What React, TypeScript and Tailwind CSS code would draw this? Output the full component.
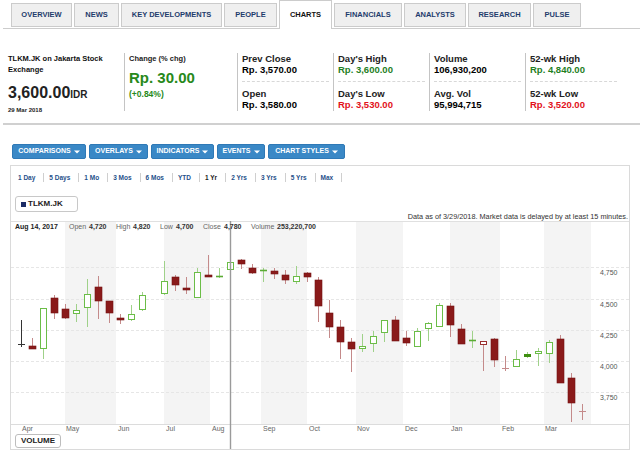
import React from 'react';

const tabs = [
  { label: 'OVERVIEW', w: 'w-[61px]' },
  { label: 'NEWS', w: 'w-[45px]' },
  { label: 'KEY DEVELOPMENTS', w: 'w-[101px]' },
  { label: 'PEOPLE', w: 'w-[53px]' },
  { label: 'CHARTS', w: 'w-[53px]', active: true },
  { label: 'FINANCIALS', w: 'w-[68px]' },
  { label: 'ANALYSTS', w: 'w-[62px]' },
  { label: 'RESEARCH', w: 'w-[63px]' },
  { label: 'PULSE', w: 'w-[48px]' },
];

const green = 'text-[#1f801f]';
const red = 'text-[#e2111b]';

const stats = [
  { a: 'Prev Close', av: 'Rp. 3,570.00', ac: 'text-black', b: 'Open', bv: 'Rp. 3,580.00', bc: 'text-black' },
  { a: "Day's High", av: 'Rp. 3,600.00', ac: green, b: "Day's Low", bv: 'Rp. 3,530.00', bc: red },
  { a: 'Volume', av: '106,930,200', ac: 'text-black', b: 'Avg. Vol', bv: '95,994,715', bc: 'text-black' },
  { a: '52-wk High', av: 'Rp. 4,840.00', ac: green, b: '52-wk Low', bv: 'Rp. 3,520.00', bc: red },
];

const buttons = [
  { label: 'COMPARISONS', w: 'w-[74px]' },
  { label: 'OVERLAYS', w: 'w-[59px]' },
  { label: 'INDICATORS', w: 'w-[63px]' },
  { label: 'EVENTS', w: 'w-[48px]' },
  { label: 'CHART STYLES', w: 'w-[77px]' },
];

const ranges = ['1 Day', '5 Days', '1 Mo', '3 Mos', '6 Mos', 'YTD', '1 Yr', '2 Yrs', '3 Yrs', '5 Yrs', 'Max'];

// x, bodyTop, bodyBottom, wickTop, wickBottom, kind
type C = [number, number, number, number, number, string];
const candles: C[] = [
  [21, 344, 344, 320, 347, 'k'],
  [32, 346, 349, 338, 349, 'r'],
  [43, 308, 349, 308, 359, 'g'],
  [54, 298, 313, 295, 319, 'r'],
  [65, 309, 318, 304, 319, 'r'],
  [76, 310, 314, 304, 322, 'g'],
  [87, 294, 308, 279, 327, 'g'],
  [98, 287, 301, 276, 319, 'r'],
  [109, 301, 313, 301, 323, 'r'],
  [120, 318, 320, 314, 324, 'r'],
  [131, 314, 320, 305, 321, 'g'],
  [142, 295, 310, 292, 311, 'g'],
  [164, 281, 294, 261, 295, 'g'],
  [175, 277, 285, 275, 291, 'r'],
  [186, 288, 290, 277, 294, 'r'],
  [197, 272, 298, 268, 298, 'g'],
  [208, 275, 277, 255, 277, 'r'],
  [219, 276, 276, 268, 278, 'gc'],
  [230, 262, 270, 262, 270, 'g'],
  [241, 260, 264, 259, 269, 'r'],
  [252, 268, 273, 264, 274, 'r'],
  [263, 270, 270, 268, 282, 'gc'],
  [274, 271, 274, 268, 279, 'r'],
  [285, 275, 280, 270, 284, 'r'],
  [296, 276, 282, 266, 284, 'g'],
  [307, 273, 277, 272, 282, 'r'],
  [318, 280, 306, 277, 322, 'r'],
  [329, 313, 327, 300, 338, 'r'],
  [340, 327, 342, 320, 359, 'r'],
  [351, 342, 349, 338, 372, 'r'],
  [362, 346, 349, 334, 352, 'g'],
  [373, 336, 344, 331, 352, 'g'],
  [384, 320, 333, 320, 342, 'g'],
  [395, 320, 341, 316, 341, 'r'],
  [406, 338, 343, 331, 346, 'r'],
  [417, 331, 347, 328, 347, 'g'],
  [428, 323, 329, 322, 341, 'g'],
  [439, 305, 327, 303, 327, 'g'],
  [450, 306, 325, 303, 337, 'r'],
  [461, 329, 344, 324, 344, 'r'],
  [472, 340, 340, 331, 348, 'gc'],
  [483, 341, 345, 341, 371, 'rh'],
  [494, 339, 360, 338, 367, 'r'],
  [505, 368, 368, 356, 371, 'rc'],
  [516, 359, 367, 350, 367, 'g'],
  [527, 354, 357, 352, 358, 'gf'],
  [538, 351, 354, 348, 366, 'g'],
  [549, 342, 354, 340, 363, 'g'],
  [560, 339, 383, 335, 383, 'r'],
  [571, 378, 403, 373, 422, 'r'],
  [582, 411, 411, 404, 420, 'rc'],
];

const bands: [number, number][] = [
  [65, 116], [164, 210], [261, 307], [356, 403], [450, 500], [544, 591],
];

const months: [string, number][] = [
  ['Apr', 22], ['May', 66], ['Jun', 118], ['Jul', 166], ['Aug', 212], ['Sep', 263],
  ['Oct', 309], ['Nov', 357], ['Dec', 405], ['Jan', 451], ['Feb', 502], ['Mar', 545],
];

const grid: [string, number][] = [
  ['4,750', 267], ['4,500', 299], ['4,250', 330], ['4,000', 361], ['3,750', 392],
];

function Candle({ c }: { c: C }) {
  const [x, top, bot, wt, wb, k] = c;
  const cx = x + 0.5;
  const isRed = k === 'r' || k === 'rc' || k === 'rh';
  const wick = k === 'k' ? '#333' : isRed ? '#c48a8a' : '#9fd189';
  return (
    <g>
      <line x1={cx} x2={cx} y1={wt} y2={wb} stroke={wick} strokeWidth={1} />
      {k === 'r' && <rect x={x - 3} y={top} width={7} height={Math.max(bot - top, 2)} fill="#8a1a1a" stroke="#741313" strokeWidth={0.6} />}
      {k === 'g' && <rect x={cx - 3} y={top + 0.5} width={6} height={Math.max(bot - top - 1, 1)} fill="#fff" stroke="#6bbd47" strokeWidth={1} />}
      {k === 'rh' && <rect x={cx - 3} y={top + 0.5} width={6} height={Math.max(bot - top - 1, 1)} fill="#fff" stroke="#9a3030" strokeWidth={1} />}
      {k === 'gf' && <rect x={x - 3} y={top} width={7} height={bot - top} fill="#3f8f10" />}
      {(k === 'gc' || k === 'rc' || k === 'k') && (
        <line x1={x - 3} x2={x + 4} y1={top + 0.5} y2={top + 0.5} stroke={k === 'gc' ? '#5aab34' : wick} strokeWidth={k === 'gc' ? 1.6 : 1} />
      )}
    </g>
  );
}

function Chart() {
  const label = { fontFamily: 'Liberation Sans, Arial, sans-serif' };
  return (
    <div className="relative h-[228px] w-[618px]">
      <svg width={618} height={228} viewBox="11 221 618 228" className="block">
        {bands.map(([a, b]) => (
          <rect key={a} x={a} y={221} width={b - a} height={203} fill="#f4f4f4" />
        ))}
        {grid.map(([t, y]) => (
          <g key={t}>
            <line x1={11} x2={629} y1={y + 0.5} y2={y + 0.5} stroke="#e6e6e6" strokeDasharray="3 2" />
            <text x={600} y={y + 7.5} fontSize={7} fill="#555" style={label}>{t}</text>
          </g>
        ))}
        <line x1={11} x2={629} y1={221.5} y2={221.5} stroke="#e0e0e0" />
        <line x1={11} x2={629} y1={424.5} y2={424.5} stroke="#dcdcdc" />
        {candles.map((c) => (
          <Candle key={c[0]} c={c} />
        ))}
        <line x1={230.5} x2={230.5} y1={221} y2={449} stroke="#9a9a9a" strokeWidth={1.4} />
        {months.map(([m, x]) => (
          <text key={m} x={x} y={431} fontSize={7} fill="#666" style={label}>{m}</text>
        ))}
        <g fontSize={7} style={label}>
          <text x={15} y={229} fontWeight="bold" fill="#222">Aug 14, 2017</text>
          <text x={69} y={229} fill="#666">Open</text>
          <text x={89} y={229} fontWeight="bold" fill="#333">4,720</text>
          <text x={116} y={229} fill="#666">High</text>
          <text x={133} y={229} fontWeight="bold" fill="#333">4,820</text>
          <text x={160} y={229} fill="#666">Low</text>
          <text x={176} y={229} fontWeight="bold" fill="#333">4,700</text>
          <text x={203} y={229} fill="#666">Close</text>
          <text x={224} y={229} fontWeight="bold" fill="#333">4,780</text>
          <text x={251} y={229} fill="#666">Volume</text>
          <text x={277} y={229} fontWeight="bold" fill="#333">253,220,700</text>
        </g>
      </svg>
      <button className="absolute left-[4px] top-[213px] flex h-[14px] w-[46px] items-center justify-center rounded-[3px] border border-[#bdbdbd] bg-white text-[8px] font-bold text-[#222]">
        VOLUME
      </button>
    </div>
  );
}

export default function App() {
  return (
    <div className="h-[450px] w-[640px] overflow-hidden bg-white font-['Liberation_Sans',Arial,sans-serif] text-[#222]">
      {/* tabs */}
      <div className="ml-[3px] flex h-[29px] items-start gap-[2px] border-b border-[#cccccc] pl-[8px]">
        {tabs.map((t) =>
          t.active ? (
            <div key={t.label} className={`${t.w} relative flex h-[29px] items-center justify-center border border-b-0 border-[#cccccc] bg-white pb-[1px] text-[7.5px] font-bold text-[#111]`}>
              {t.label}
            </div>
          ) : (
            <div key={t.label} className={`${t.w} mt-[3px] flex h-[24px] items-center justify-center border border-[#cbcbcb] bg-[#efefef] text-[7.5px] font-bold text-[#1e3c6c]`}>
              {t.label}
            </div>
          )
        )}
      </div>

      {/* quote */}
      <div className="mt-[24px] flex h-[58px]">
        <div className="w-[124px] pl-[8px]">
          <div className="w-[108px] text-[7.5px] font-bold leading-[11px] text-[#111]">TLKM.JK on Jakarta Stock Exchange</div>
          <div className="mt-[10px] flex items-baseline leading-[16px]">
            <span className="text-[16px] font-bold">3,600.00</span>
            <span className="text-[10px] font-bold">IDR</span>
          </div>
          <div className="mt-[3px] text-[6px] font-bold leading-[8px]">29 Mar 2018</div>
        </div>
        <div className="w-[113px] border-l border-[#c4c4c4] pl-[4px]">
          <div className="text-[7.5px] font-bold leading-[11px]">Change (% chg)</div>
          <div className="mt-[5px] text-[15px] font-bold leading-[18px] text-[#27891a]">Rp. 30.00</div>
          <div className="mt-[2px] text-[8.5px] font-bold leading-[11px] text-[#27891a]">(+0.84%)</div>
        </div>
        {stats.map((s) => (
          <div key={s.a} className="w-[96px] border-l border-[#c4c4c4] pl-[4px] pr-[4px]">
            <div className="text-[9.5px] font-bold leading-[11px]">{s.a}</div>
            <div className={`text-[9.5px] font-bold leading-[11px] ${s.ac}`}>{s.av}</div>
            <div className="mt-[6px] border-t border-dashed border-[#d8d8d8]" />
            <div className="mt-[6px] text-[9.5px] font-bold leading-[11px]">{s.b}</div>
            <div className={`text-[9.5px] font-bold leading-[11px] ${s.bc}`}>{s.bv}</div>
          </div>
        ))}
      </div>

      <div className="ml-[3px] mt-[12px] h-[2px] bg-[#d0d0d0]" />

      {/* chart toolbar */}
      <div className="ml-[12px] mt-[19px] flex gap-[3px]">
        {buttons.map((b) => (
          <div key={b.label} className={`${b.w} flex h-[15px] items-center justify-center gap-[3px] rounded-[2px] border border-[#2f79b6] bg-[#3a88c6] text-[7px] font-bold text-white`}>
            <span>{b.label}</span>
            <svg width={6} height={4} viewBox="0 0 6 4">
              <path d="M0 0.5 L6 0.5 L3 3.5 Z" fill="#fff" />
            </svg>
          </div>
        ))}
      </div>

      {/* chart panel */}
      <div className="ml-[10px] mt-[6px] h-[285px] w-[620px] border border-[#dadada]">
        <div className="flex h-[23px] items-center pl-[2px]">
          {ranges.map((r) => (
            <div key={r} className="flex items-center">
              <span className={`ml-[5px] mr-[8px] text-[6.5px] font-bold ${r === '1 Yr' ? 'text-[#222]' : 'text-[#25508a]'}`}>{r}</span>
              <span className="h-[9px] w-px bg-[#cfcfcf]" />
            </div>
          ))}
        </div>
        <div className="pl-[4px] pt-[7px]">
          <div className="flex h-[16px] w-[63px] items-center gap-[2px] rounded-[3px] border border-[#c8c8c8] pl-[5px]">
            <span className="h-[5px] w-[5px] bg-[#1c2c66]" />
            <span className="text-[8px] font-bold text-[#222]">TLKM.JK</span>
          </div>
        </div>
        <div className="h-[9px] pr-[1px] text-right text-[7.3px] leading-[9px] text-[#333]">
          Data as of 3/29/2018. Market data is delayed by at least 15 minutes.
        </div>
        <Chart />
      </div>
    </div>
  );
}
